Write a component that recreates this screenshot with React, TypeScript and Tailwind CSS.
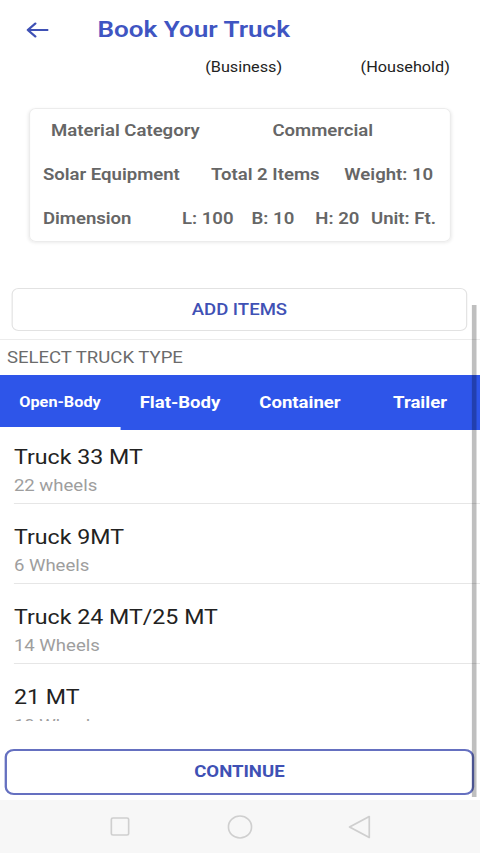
import { ReactNode } from 'react';

type Truck = { name: string; wheels: string };

const trucks: Truck[] = [
  { name: 'Truck 33 MT', wheels: '22 wheels' },
  { name: 'Truck 9MT', wheels: '6 Wheels' },
  { name: 'Truck 24 MT/25 MT', wheels: '14 Wheels' },
  { name: '21 MT', wheels: '10 Wheels' },
];

const tabs = ['Open-Body', 'Flat-Body', 'Container', 'Trailer'];

// the capture is a 414px wide layout stretched to 480px, so lay out at 414 and stretch
export default function App() {
  return (
    <div className="relative flex h-[853px] w-[414px] origin-top-left scale-x-[1.1594] flex-col overflow-hidden bg-white font-['Roboto',sans-serif]">
      {/* header */}
      <div className="flex h-[60px] shrink-0 items-center">
        <svg className="ml-[22px]" width="20" height="18" viewBox="0 0 20 18" fill="none">
          <path d="M19 9H2M8.5 2.5L2 9l6.5 6.5" stroke="#3f51b5" strokeWidth="2" strokeLinecap="round" strokeLinejoin="round" />
        </svg>
        <h1 className="ml-[42px] text-[22.5px] font-semibold text-[#3f55c2]">Book Your Truck</h1>
      </div>
      <div className="flex h-[14px] shrink-0 items-center text-[14px] text-[#222]">
        <span className="ml-[177px] w-[134px]">(Business)</span>
        <span>(Household)</span>
      </div>

      {/* material summary */}
      <div className="ml-[25px] mt-[34px] w-[364px] shrink-0 rounded-[6px] border border-[#ececec] text-[16px] font-semibold text-[#666] shadow-[0_1px_3px_rgba(0,0,0,0.08)]">
        <Row className="pl-[18px]">
          <span className="w-[191px]">Material Category</span>
          <span>Commercial</span>
        </Row>
        <Row className="pl-[11px]">
          <span className="w-[145px]">Solar Equipment</span>
          <span className="w-[115px]">Total 2 Items</span>
          <span>Weight: 10</span>
        </Row>
        <Row className="pl-[11px]">
          <span className="w-[120px]">Dimension</span>
          <span className="w-[60px]">L: 100</span>
          <span className="w-[55px]">B: 10</span>
          <span className="w-[48px]">H: 20</span>
          <span>Unit: Ft.</span>
        </Row>
      </div>

      <button className="ml-[10px] mt-[46px] h-[43px] w-[393px] shrink-0 rounded-[6px] border border-[#e2e2e2] text-[16px] font-medium text-[#3f51b5]">
        ADD ITEMS
      </button>

      {/* truck types */}
      <div className="mt-[8px] h-[382px] shrink-0 overflow-hidden border-t border-[#ececec]">
        <div className="flex h-[35px] items-center pl-[6px] text-[16px] text-[#6b6b6b]">SELECT TRUCK TYPE</div>
        <div className="grid h-[55px] grid-cols-4 bg-[#2e55e9] font-bold text-white">
          {tabs.map((tab, i) => (
            <div
              key={tab}
              className={
                i === 0
                  ? 'flex items-center justify-center border-b-[3px] border-white pt-[3px] text-[14px]'
                  : 'flex items-center justify-center text-[16px]'
              }
            >
              {tab}
            </div>
          ))}
        </div>
        <ul>
          {trucks.map((t) => (
            <li key={t.name} className="mb-[6px] ml-[12px] h-[74px] border-b border-[#e6e6e6]">
              <div className="pt-[15px] text-[20px] leading-[24px] text-[#222]">{t.name}</div>
              <div className="mt-[7px] text-[16px] leading-[20px] text-[#9e9e9e]">{t.wheels}</div>
            </li>
          ))}
        </ul>
      </div>

      <button className="ml-[4px] mt-[28px] h-[46px] w-[405px] shrink-0 rounded-[8px] border-2 border-[#6570c0] text-[16px] font-bold text-[#3f51b5]">
        CONTINUE
      </button>

      {/* system nav */}
      <div className="mt-auto flex h-[53px] shrink-0 items-center bg-[#f7f7f7]">
        <svg className="ml-[95px]" width="17" height="19" viewBox="0 0 17 19" fill="none" stroke="#cfcfcf" strokeWidth="1.5">
          <rect x="1" y="1" width="15" height="17" rx="1.5" />
        </svg>
        <svg className="ml-[84px]" width="22" height="24" viewBox="0 0 22 24" fill="none" stroke="#cfcfcf" strokeWidth="1.5">
          <ellipse cx="11" cy="12" rx="10" ry="11" />
        </svg>
        <svg className="ml-[82px]" width="20" height="24" viewBox="0 0 20 24" fill="none" stroke="#cfcfcf" strokeWidth="1.5">
          <path d="M18.5 1.5L1.5 12 18.5 22.5z" strokeLinejoin="round" />
        </svg>
      </div>

      {/* scrollbar */}
      <div className="absolute left-[407px] top-[305px] h-[492px] w-[3.5px] bg-black/25" />
    </div>
  );
}

function Row({ className, children }: { className: string; children: ReactNode }) {
  return <div className={`flex h-[44px] items-center ${className}`}>{children}</div>;
}
